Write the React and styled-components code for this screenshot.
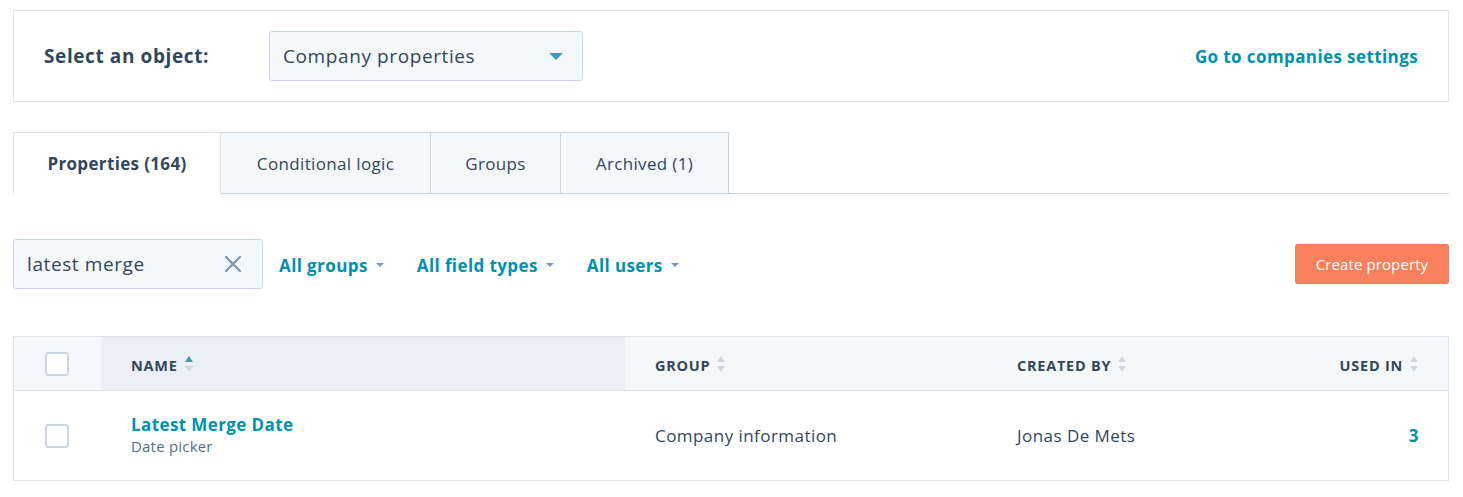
import React from 'react';
import styled, { createGlobalStyle } from 'styled-components';

const GlobalStyle = createGlobalStyle`
  body {
    margin: 0;
    background: #fff;
    font-family: "Open Sans", "Liberation Sans", sans-serif;
    color: #33475b;
    letter-spacing: 0.45px;
  }
`

const Page = styled.div`
  padding: 10px 14px 0 13px;
  width: 1436px;
`

const ObjectBar = styled.div`
  display: flex;
  align-items: center;
  height: 90px;
  border: 1px solid #dfe3eb;
  padding: 0 30px 0 30px;
`

const Label = styled.span`
  font-weight: 700;
  font-size: 19px;
  letter-spacing: 0.6px;
  width: 225px;
`

const Select = styled.div`
  display: flex;
  align-items: center;
  justify-content: space-between;
  width: 314px;
  height: 50px;
  box-sizing: border-box;
  padding: 0 19px 0 13px;
  background: #f5f8fa;
  border: 1px solid #cbd6e2;
  border-radius: 3px;
  font-size: 19px;
  letter-spacing: 0.6px;
`

const Caret = styled.span`
  width: 0;
  height: 0;
  border-left: ${p => p.size}px solid transparent;
  border-right: ${p => p.size}px solid transparent;
  border-top: ${p => p.size}px solid ${p => p.color};
  margin-left: ${p => p.gap || 0}px;
`

const SettingsLink = styled.a`
  margin-left: auto;
  color: #0091ae;
  font-weight: 700;
  font-size: 17px;
  letter-spacing: 0.4px;
`

const Tabs = styled.div`
  display: flex;
  margin-top: 30px;
  border-bottom: 1px solid #cbd6e2;
  height: 61px;
`

const Tab = styled.div`
  display: flex;
  align-items: center;
  justify-content: center;
  width: ${p => p.w}px;
  box-sizing: border-box;
  font-size: 17px;
  letter-spacing: 0.35px;
  border: 1px solid #cbd6e2;
  border-left: ${p => (p.first ? '1px solid #cbd6e2' : 'none')};
  background: ${p => (p.active ? '#fff' : '#f5f8fa')};
  font-weight: ${p => (p.active ? 700 : 400)};
  margin-bottom: ${p => (p.active ? '-1px' : '0')};
  border-bottom: ${p => (p.active ? '1px solid #fff' : 'none')};
  border-color: ${p => (p.active ? '#dfe3eb' : '#cbd6e2')};
  border-bottom-color: #fff;
`

const FilterRow = styled.div`
  display: flex;
  align-items: center;
  margin-top: 45px;
`

const Search = styled.div`
  display: flex;
  align-items: center;
  justify-content: space-between;
  width: 250px;
  height: 50px;
  box-sizing: border-box;
  padding: 0 20px 0 13px;
  background: #f5f8fa;
  border: 1px solid #cbd6e2;
  border-radius: 3px;
  font-size: 19px;
  letter-spacing: 0.6px;
`

const Filter = styled.div`
  display: flex;
  align-items: center;
  margin-left: ${p => p.ml}px;
  padding-top: 2px;
  color: #0091ae;
  font-weight: 700;
  font-size: 17px;
  letter-spacing: 0.4px;
`

const CreateButton = styled.button`
  margin-left: auto;
  width: 154px;
  height: 40px;
  border: none;
  border-radius: 3px;
  background: #f8805c;
  color: #fff;
  font-family: inherit;
  font-size: 15px;
  letter-spacing: 0.1px;
`

const Table = styled.div`
  margin-top: 47px;
  border: 1px solid #dfe3eb;
  display: grid;
  grid-template-columns: 87px 524px 362px 1fr 200px;
`

const HeadCell = styled.div`
  display: flex;
  align-items: center;
  justify-content: ${p => (p.right ? 'flex-end' : 'flex-start')};
  height: 54px;
  box-sizing: border-box;
  padding: 3px ${p => (p.right ? 29 : 0)}px 0 ${p => (p.pl ?? 30)}px;
  background: ${p => (p.sorted ? '#eaf0f6' : '#f5f8fa')};
  border-bottom: 1px solid #dfe3eb;
  font-weight: 700;
  font-size: 14.5px;
  text-transform: uppercase;
  letter-spacing: 0.75px;
`

const Cell = styled.div`
  display: flex;
  flex-direction: column;
  justify-content: center;
  align-items: ${p => (p.right ? 'flex-end' : 'flex-start')};
  height: 89px;
  padding: 0 ${p => (p.right ? 29 : 0)}px 0 ${p => (p.pl ?? 30)}px;
  font-size: 17px;
  letter-spacing: 0.45px;
`

const Checkbox = styled.span`
  width: 24px;
  height: 24px;
  box-sizing: border-box;
  border: 2px solid #cbd6e2;
  border-radius: 3px;
  background: #fff;
  margin-top: ${p => (p.head ? -3 : 0)}px;
`

const NameLink = styled.a`
  color: #0091ae;
  font-weight: 700;
  font-size: 17px;
  letter-spacing: 0.4px;
  margin-top: -2px;
`

const SubText = styled.span`
  color: #516f90;
  font-size: 15px;
  letter-spacing: 0.2px;
`

const Count = styled.a`
  color: #0091ae;
  font-weight: 700;
  font-size: 17px;
`

const Sort = ({ active }) => (
  <svg width="10" height="18" viewBox="0 0 10 18" style={{ marginLeft: 6, marginTop: -3 }}>
    <path d="M5 1 L9 7 L1 7 Z" fill={active ? '#3c9bb5' : '#cbd6e2'} />
    <path d="M5 17 L9 11 L1 11 Z" fill="#cbd6e2" />
  </svg>
)

const ClearIcon = () => (
  <svg width="18" height="18" viewBox="0 0 18 18">
    <path d="M2 2 L16 16 M16 2 L2 16" stroke="#7c98b6" strokeWidth="2.4" strokeLinecap="round" />
  </svg>
)

const App = () => (
  <Page>
    <GlobalStyle />
    <ObjectBar>
      <Label>Select an object:</Label>
      <Select>
        Company properties
        <Caret size={7} color="#3c9bb5" />
      </Select>
      <SettingsLink>Go to companies settings</SettingsLink>
    </ObjectBar>

    <Tabs>
      <Tab first active w={208}>Properties (164)</Tab>
      <Tab w={210}>Conditional logic</Tab>
      <Tab w={130}>Groups</Tab>
      <Tab w={168}>Archived (1)</Tab>
    </Tabs>

    <FilterRow>
      <Search>
        latest merge
        <ClearIcon />
      </Search>
      <Filter ml={16}>All groups<Caret size={4} color="#7c98b6" gap={8} /></Filter>
      <Filter ml={33}>All field types<Caret size={4} color="#7c98b6" gap={8} /></Filter>
      <Filter ml={33}>All users<Caret size={4} color="#7c98b6" gap={8} /></Filter>
      <CreateButton>Create property</CreateButton>
    </FilterRow>

    <Table>
      <HeadCell pl={31}><Checkbox head /></HeadCell>
      <HeadCell sorted>Name<Sort active /></HeadCell>
      <HeadCell>Group<Sort /></HeadCell>
      <HeadCell>Created by<Sort /></HeadCell>
      <HeadCell right>Used in<Sort /></HeadCell>

      <Cell pl={31}><Checkbox /></Cell>
      <Cell>
        <NameLink>Latest Merge Date</NameLink>
        <SubText>Date picker</SubText>
      </Cell>
      <Cell>Company information</Cell>
      <Cell>Jonas De Mets</Cell>
      <Cell right><Count>3</Count></Cell>
    </Table>
  </Page>
)

export default App;
